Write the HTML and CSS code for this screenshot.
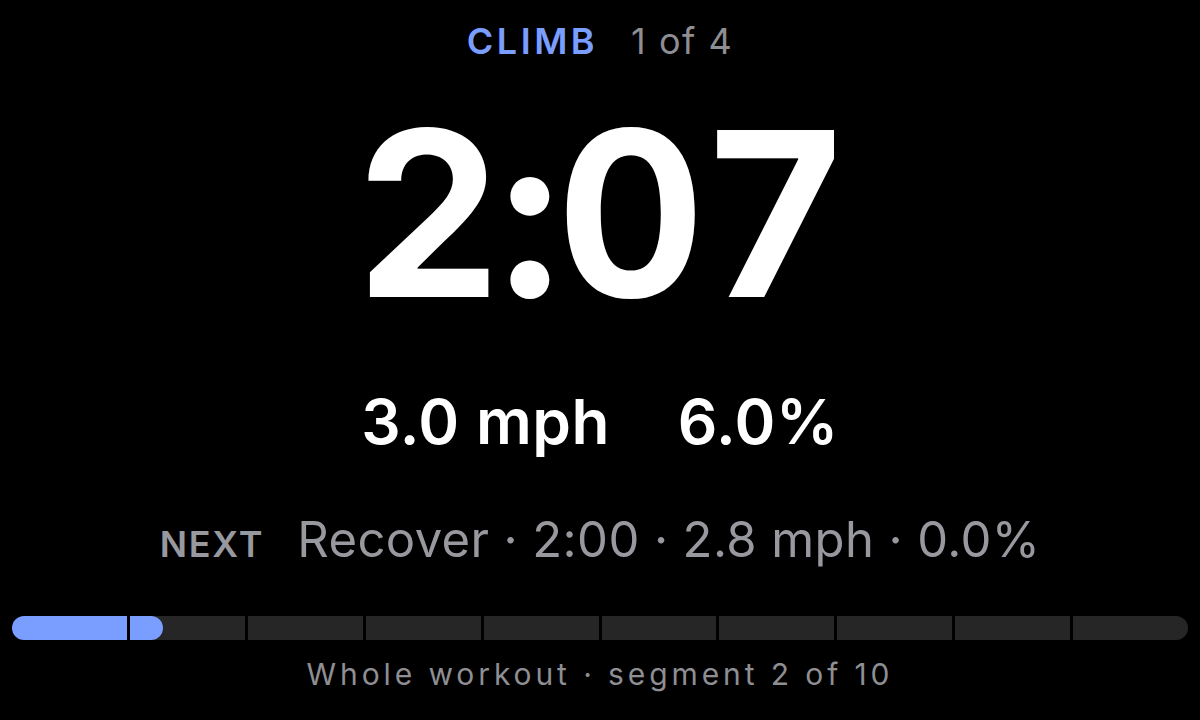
FILE: index.html
```html
<!DOCTYPE html>
<html lang="en">
<head>
  <meta charset="UTF-8">
  <meta name="viewport" content="width=device-width, initial-scale=1.0">
  <title>Interval Workout</title>
  <link rel="stylesheet" href="styles.css">
</head>
<body>
  <main class="screen">
    <!-- Current interval -->
    <div class="interval">
      <span class="interval-name">CLIMB</span>
      <span class="interval-count">1 of 4</span>
    </div>

    <div class="timer">2:07</div>

    <div class="targets">
      <span>3.0 mph</span>
      <span>6.0%</span>
    </div>

    <!-- Up next -->
    <div class="next">
      <span class="next-label">NEXT</span>
      <span class="next-detail">Recover · 2:00 · 2.8 mph · 0.0%</span>
    </div>

    <!-- Whole workout progress -->
    <div class="progress">
      <div class="segment done"></div>
      <div class="segment"><div class="fill" style="width: 29%"></div></div>
      <div class="segment"></div>
      <div class="segment"></div>
      <div class="segment"></div>
      <div class="segment"></div>
      <div class="segment"></div>
      <div class="segment"></div>
      <div class="segment"></div>
      <div class="segment"></div>
    </div>
    <div class="progress-caption">Whole workout · segment 2 of 10</div>
  </main>
</body>
</html>
```

FILE: styles.css
```css
/* General */
body {
  margin: 0;
  background: #000;
  color: #fff;
  font-family: Inter, "Noto Sans", sans-serif;
}

.screen {
  width: 1200px;
  height: 720px;
  display: flex;
  flex-direction: column;
  align-items: center;
  overflow: hidden;
}

/* Current interval */
.interval {
  margin-top: 23px;
  display: flex;
  gap: 33px;
  font-size: 36px;
  line-height: 1;
}

.interval-name {
  color: #7a9eff;
  font-weight: 600;
  letter-spacing: 3.5px;
}

.interval-count {
  color: #8e8e93;
  letter-spacing: 1.5px;
}

.timer {
  margin-top: 39px;
  font-size: 230px;
  font-weight: 700;
  line-height: 1;
  letter-spacing: -4px;
  font-variant-numeric: tabular-nums;
}

.targets {
  margin-top: 63px;
  display: flex;
  gap: 68px;
  font-size: 62px;
  font-weight: 600;
  line-height: 1;
  letter-spacing: 0.5px;
}

/* Up next */
.next {
  margin-top: 62px;
  display: flex;
  align-items: baseline;
  gap: 33px;
  color: #98989f;
  line-height: 1;
}

.next-label {
  font-size: 36px;
  font-weight: 600;
  letter-spacing: 1.8px;
}

.next-detail {
  font-size: 49px;
  letter-spacing: 0.4px;
}

/* Progress bar */
.progress {
  margin-top: 52px;
  align-self: stretch;
  margin-left: 12px;
  margin-right: 12px;
  height: 24px;
  display: flex;
  gap: 3px;
  border-radius: 12px;
  overflow: hidden;
}

.segment {
  flex: 1;
  background: #262626;
}

.segment.done {
  background: #7a9eff;
}

.fill {
  height: 100%;
  background: #7a9eff;
  border-radius: 0 12px 12px 0;
}

.progress-caption {
  margin-top: 19px;
  font-size: 30px;
  line-height: 1;
  letter-spacing: 3.9px;
  color: #8e8e93;
}
```
